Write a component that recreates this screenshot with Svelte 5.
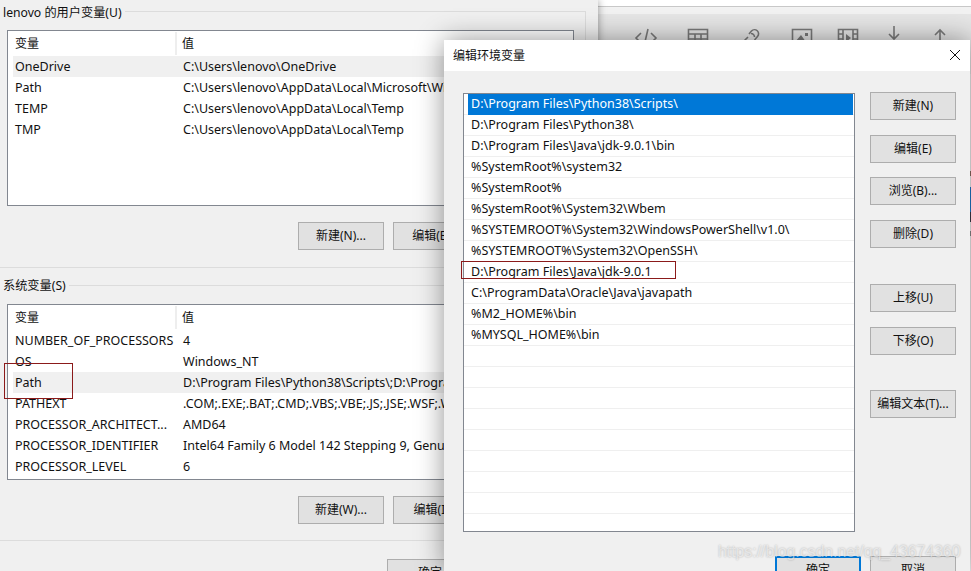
<script lang="ts">
	const userVars = [
		{ name: 'OneDrive', value: 'C:\\Users\\lenovo\\OneDrive', active: true },
		{ name: 'Path', value: 'C:\\Users\\lenovo\\AppData\\Local\\Microsoft\\WindowsApps;' },
		{ name: 'TEMP', value: 'C:\\Users\\lenovo\\AppData\\Local\\Temp' },
		{ name: 'TMP', value: 'C:\\Users\\lenovo\\AppData\\Local\\Temp' }
	];

	const systemVars = [
		{ name: 'NUMBER_OF_PROCESSORS', value: '4' },
		{ name: 'OS', value: 'Windows_NT' },
		{ name: 'Path', value: 'D:\\Program Files\\Python38\\Scripts\\;D:\\Program Files\\Python38\\;', active: true },
		{ name: 'PATHEXT', value: '.COM;.EXE;.BAT;.CMD;.VBS;.VBE;.JS;.JSE;.WSF;.WSH;.MSC' },
		{ name: 'PROCESSOR_ARCHITECT...', value: 'AMD64' },
		{ name: 'PROCESSOR_IDENTIFIER', value: 'Intel64 Family 6 Model 142 Stepping 9, GenuineIntel' },
		{ name: 'PROCESSOR_LEVEL', value: '6' }
	];

	const paths = [
		'D:\\Program Files\\Python38\\Scripts\\',
		'D:\\Program Files\\Python38\\',
		'D:\\Program Files\\Java\\jdk-9.0.1\\bin',
		'%SystemRoot%\\system32',
		'%SystemRoot%',
		'%SystemRoot%\\System32\\Wbem',
		'%SYSTEMROOT%\\System32\\WindowsPowerShell\\v1.0\\',
		'%SYSTEMROOT%\\System32\\OpenSSH\\',
		'D:\\Program Files\\Java\\jdk-9.0.1',
		'C:\\ProgramData\\Oracle\\Java\\javapath',
		'%M2_HOME%\\bin',
		'%MYSQL_HOME%\\bin',
		'', '', '', '', '', '', '', ''
	];
</script>

{#snippet varList(rows)}
	<div class="var-list">
		<div class="var-head">
			<span class="head-name">变量</span>
			<span class="head-value">值</span>
		</div>
		{#each rows as row}
			<div class="var-row" class:active={row.active}>
				<span class="var-name">{row.name}</span>
				<span class="var-value">{row.value}</span>
			</div>
		{/each}
	</div>
{/snippet}

<div class="desktop">
	<div class="page-behind">
		<div class="page-top"></div>
		<div class="page-band"></div>
		<div class="toolbar">
			<svg class="tool" viewBox="0 0 20 20"><path d="M7 4l-5 6 5 6"/></svg>
			<svg class="tool wide" viewBox="0 0 20 20"><path d="M5 5l-5 5 5 5M15 5l5 5-5 5M12 1L8 18"/></svg>
			<svg class="tool wide" viewBox="0 0 20 20"><path d="M0.5 1.5h19v16h-19zM0.5 6h19M0.5 11h19M7 6v11M13 6v11"/></svg>
			<svg class="tool wide" viewBox="0 0 20 20"><path d="M9 6l2.5-3a4 4 0 0 1 6 5.5l-3 3.5M11 5.5a3.5 3.5 0 0 1 3.5 3.5M8 9l-6 6"/></svg>
			<svg class="tool" viewBox="0 0 20 20"><path d="M0.5 1.5h19v16h-19z"/><path class="solid" d="M3 14l6-7 5 7zM13 5h3v3h-3z"/></svg>
			<svg class="tool" viewBox="0 0 20 20"><path d="M0.5 1.5h19v16h-19zM5 1.5v16M15 1.5v16M0.5 6h4M0.5 11h4M15 6h4.5M15 11h4.5"/><path class="solid" d="M8 6l5 4-5 4z"/></svg>
			<svg class="tool" viewBox="0 0 20 20"><path d="M10 -2v13M5 6l5 5 5-5M3 13h3M9 13h2M14 13h3"/></svg>
			<svg class="tool" viewBox="0 0 20 20"><path d="M10 16V2M5 7l5-5 5 5"/></svg>
		</div>
		<div class="page-edge"></div>
	</div>

	<section class="env-window">
		<div class="group-title">
			<span>lenovo 的用户变量(U)</span>
			<i class="group-line"></i>
		</div>
		<div class="group-body">
			{@render varList(userVars)}
			<div class="btn-row">
				<button>新建(N)...</button>
				<button>编辑(E)...</button>
			</div>
		</div>

		<hr class="divider first" />

		<div class="group-title">
			<span>系统变量(S)</span>
			<i class="group-line"></i>
		</div>
		<div class="group-body">
			{@render varList(systemVars)}
			<div class="btn-row">
				<button>新建(W)...</button>
				<button>编辑(I)...</button>
			</div>
		</div>

		<hr class="divider second" />

		<div class="btn-row footer-row">
			<button>确定</button>
		</div>
	</section>

	<section class="edit-dialog">
		<header class="dialog-title">
			<span>编辑环境变量</span>
			<svg class="close" viewBox="0 0 10 10" width="10" height="10"><path d="M0 0l10 10M10 0L0 10"/></svg>
		</header>
		<div class="dialog-body">
			<div class="dialog-main">
				<div class="path-list">
					{#each paths as path, i}
						<div class="path-row">
							<span class="path-label" class:selected={i === 0}>{path}</span>
						</div>
					{/each}
				</div>
				<div class="btn-stack">
					<button>新建(N)</button>
					<button>编辑(E)</button>
					<button>浏览(B)...</button>
					<button>删除(D)</button>
					<button class="after-delete">上移(U)</button>
					<button>下移(O)</button>
					<button class="after-move">编辑文本(T)...</button>
				</div>
			</div>
			<div class="dialog-footer">
				<button class="primary">确定</button>
				<button>取消</button>
			</div>
		</div>
	</section>

	<div class="mark mark-path"></div>
	<div class="mark mark-jdk"></div>
	<div class="watermark">https://blog.csdn.net/qq_43674360</div>
</div>

<style>
	:global(body) {
		margin: 0;
		background: #f0f0f0;
	}

	.desktop {
		position: relative;
		width: 971px;
		height: 571px;
		overflow: hidden;
		font-family: 'Noto Sans', 'Noto Sans CJK SC', sans-serif;
		font-size: 12px;
		color: #111;
	}

	button {
		width: 86px;
		height: 28px;
		padding: 0 0 2px;
		box-sizing: border-box;
		border: 1px solid #adadad;
		background: #e1e1e1;
		font: inherit;
		color: #111;
		white-space: nowrap;
	}

	/* page behind the two dialogs */
	.page-behind {
		position: absolute;
		left: 598px;
		right: 0;
		top: 0;
		height: 100%;
		background: #f0f0f0;
	}

	.page-top {
		height: 6px;
		background: #fff;
		border-bottom: 1px solid #c8c8c8;
	}

	.page-band {
		height: 7px;
		background: #f2f2f2;
	}

	.toolbar {
		display: flex;
		height: 60px;
		padding: 14px 0 0 0;
		box-sizing: border-box;
		gap: 26px;
		background: #e6e6e6;
	}

	.tool {
		width: 20px;
		height: 20px;
		flex: none;
		overflow: visible;
		fill: none;
		stroke: #7a7a7a;
		stroke-width: 1.6;
	}

	.tool:first-child {
		margin-left: -8px;
	}

	.tool.wide {
		margin-right: 6px;
	}

	.tool .solid {
		fill: #7a7a7a;
		stroke: none;
	}

	.page-edge {
		position: absolute;
		right: 0;
		top: 160px;
		width: 1px;
		height: 120px;
		background: linear-gradient(
			#f0f0f0 0 11px,
			#8a6a60 11px 16px,
			#f0f0f0 16px 27px,
			#1f78c8 27px 52px,
			#3a3a48 52px 62px,
			#f0f0f0 62px 71px,
			#8a8a8a 71px 76px,
			#f0f0f0 76px
		);
	}

	/* environment variables window */
	.env-window {
		position: absolute;
		left: 0;
		top: 0;
		width: 598px;
		height: 571px;
		background: #f0f0f0;
		box-shadow: 0 0 8px rgba(0, 0, 0, 0.4);
	}

	.group-title {
		display: flex;
		width: 586px;
		height: 18px;
		box-sizing: border-box;
		padding-left: 3px;
		line-height: 18px;
		font-size: 12.2px;
	}

	.group-title:first-child {
		margin-top: 4px;
	}

	.group-line {
		flex: 1;
		height: 10px;
		margin: 8px 0 0 3px;
		border-top: 1px solid #dcdcdc;
		border-right: 1px solid #dcdcdc;
	}

	.group-title:first-child .group-line {
		height: 11px;
		margin-top: 7px;
	}

	.group-body {
		width: 586px;
		box-sizing: border-box;
		padding: 9px 11px 0 7px;
		border-right: 1px solid #dcdcdc;
	}

	.group-title:first-child + .group-body {
		padding-top: 8px;
	}

	.var-list {
		height: 176px;
		box-sizing: border-box;
		border: 1px solid #828790;
		background: #fff;
		overflow: hidden;
	}

	.var-head {
		display: grid;
		grid-template-columns: 169px 1fr;
		height: 25px;
		line-height: 25px;
	}

	.head-name {
		padding-left: 7px;
		border-right: 2px solid #eee;
		margin: 1px 0;
		line-height: 23px;
	}

	.head-value {
		padding-left: 5px;
	}

	.var-row {
		display: grid;
		grid-template-columns: 163px 1fr;
		height: 21px;
		margin-left: 5px;
		line-height: 21px;
		font-size: 12.5px;
		white-space: nowrap;
	}

	.var-row.active {
		background: #f0f0f0;
	}

	.var-name {
		padding-left: 2px;
	}

	.var-value {
		padding-left: 7px;
		overflow: hidden;
	}

	.btn-row {
		display: flex;
		gap: 9px;
		padding: 16px 0 0 291px;
	}

	.divider {
		width: 598px;
		height: 1px;
		margin: 17px 0 9px;
		border: 0;
		background: #dcdcdc;
	}

	.footer-row {
		padding: 18px 0 0 387px;
	}

	.divider.second {
		margin: 16px 0 0;
	}

	/* edit dialog */
	.edit-dialog {
		position: absolute;
		left: 444px;
		top: 40px;
		width: 526px;
		height: 531px;
		background: #f0f0f0;
		box-shadow: 0 0 26px rgba(0, 0, 0, 0.42);
	}

	.dialog-title {
		display: flex;
		align-items: center;
		justify-content: space-between;
		height: 31px;
		box-sizing: border-box;
		padding: 0 10px 2px 9px;
		background: #fff;
	}

	.close {
		fill: none;
		stroke: #111;
		stroke-width: 1;
	}

	.dialog-body {
		padding: 22px 14px 0 19px;
	}

	.dialog-main {
		display: flex;
		gap: 15px;
	}

	.path-list {
		width: 392px;
		height: 439px;
		box-sizing: border-box;
		border: 1px solid #828790;
		background: #fff;
		flex: none;
	}

	.path-row {
		display: flex;
		height: 21px;
		padding-left: 4px;
		box-shadow: inset 0 -1px #efefef;
		line-height: 19px;
		font-size: 12.5px;
	}

	.path-label {
		flex: 1;
		margin-right: 1px;
		padding-left: 3px;
	}

	.path-label.selected {
		background: #0078d7;
		color: #fff;
	}

	.btn-stack {
		display: flex;
		flex-direction: column;
		gap: 14.5px;
		margin-top: -1px;
	}

	.after-delete {
		margin-top: 22px;
	}

	.after-move {
		margin-top: 21px;
	}

	.dialog-footer {
		display: flex;
		justify-content: flex-end;
		gap: 9px;
		margin-top: 24px;
	}

	.primary {
		border: 2px solid #0078d7;
	}

	/* annotations drawn over the screenshot */
	.mark {
		position: absolute;
		box-sizing: border-box;
		border: 1px solid #8b1a1a;
	}

	.mark-path {
		left: 4px;
		top: 363px;
		width: 69px;
		height: 36px;
	}

	.mark-jdk {
		left: 461px;
		top: 261px;
		width: 215px;
		height: 18px;
	}

	.watermark {
		position: absolute;
		left: 718px;
		top: 542px;
		font-family: 'Liberation Sans', sans-serif;
		font-size: 15.8px;
		line-height: 20px;
		color: rgba(255, 255, 255, 0.55);
		text-shadow: 0 0 2px rgba(0, 0, 0, 0.28);
		white-space: nowrap;
	}
</style>
